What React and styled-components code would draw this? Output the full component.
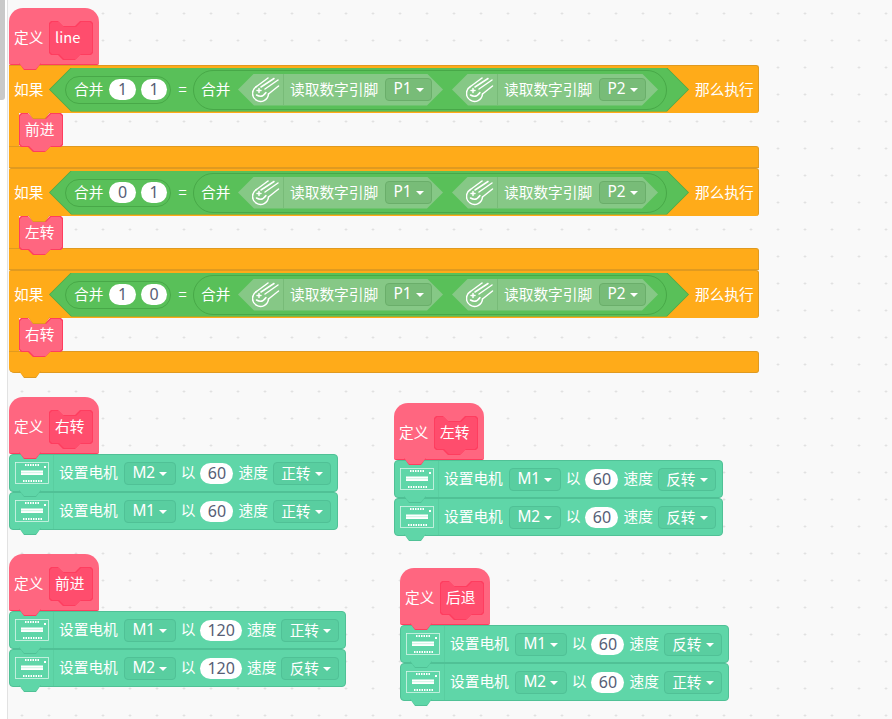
import React from 'react';
import styled, { createGlobalStyle, css } from 'styled-components';

const GlobalStyle = createGlobalStyle`
  html, body { margin: 0; padding: 0; background: #f9f9f9; }
  body { font-family: "Noto Sans CJK SC", "Noto Sans", sans-serif; overflow: hidden; }
`;

const PINK = '#ff6680';
const PINK_EDGE = '#ff3d5f';
const ORANGE = '#ffab19';
const ORANGE_EDGE = '#e09a20';
const TEAL = '#5fd6a8';
const TEAL_EDGE = '#50c196';
const TEAL_DARK = '#59cea0';

// the CJK font sits a little low in its line box
const wordText = css`
  flex: none;
  padding-bottom: 2px;
  white-space: nowrap;
`;

const Canvas = styled.div`
  position: relative;
  width: 892px;
  height: 719px;
  overflow: hidden;
  color: #fff;
  font-size: 14.7px;
  line-height: 20px;
  background-color: #f9f9f9;
  background-image: radial-gradient(circle, #dcdcdc 0.9px, transparent 1.2px);
  background-size: 27px 27px;
  background-position: 8.5px 0;
`;

const Gutter = styled.div`
  position: absolute;
  left: 0;
  top: 0;
  bottom: 0;
  width: 7px;
  background: #fff;
  border-right: 1px solid #e2e2e2;
  z-index: 5;
`;

const ScrollThumb = styled.div`
  width: 5px;
  height: 100px;
  background: #c9c9c9;
  border-radius: 0 0 3px 0;
`;

const Stack = styled.div`
  position: absolute;
  left: ${p => p.$x}px;
  top: ${p => p.$y}px;
  display: flex;
  flex-direction: column;
  align-items: flex-start;
`;

/* the tab under a block */
const Notch = styled.div`
  position: absolute;
  left: ${p => p.$left || 10}px;
  bottom: -6px;
  width: 22px;
  height: 7px;
  background: ${p => p.$edge};
  clip-path: polygon(0 0, 100% 0, calc(100% - 5px) 100%, 5px 100%);
  z-index: 2;
  &::after {
    content: '';
    position: absolute;
    left: 0;
    right: 0;
    top: 0;
    bottom: 1px;
    background: ${p => p.$fill};
    clip-path: polygon(0 0, 100% 0, calc(100% - 5px) 100%, 5px 100%);
  }
`;

const Hat = styled.div`
  position: relative;
  box-sizing: border-box;
  width: 90px;
  height: 57px;
  padding: 13px 5px 0;
  display: flex;
  align-items: flex-start;
  gap: 5px;
  background: ${PINK};
  border-radius: 14px 14px 2px 2px;
  border-bottom: 1px solid ${PINK_EDGE};
`;

const HatLabel = styled.span`
  flex: none;
  width: 30px;
  margin-top: 6px;
  white-space: nowrap;
`;

const SLOT_SHAPE = `polygon(
  2px 0, 9px 0, 14px 5px, 26px 5px, 31px 0, calc(100% - 2px) 0, 100% 2px,
  100% calc(100% - 7px), calc(100% - 2px) calc(100% - 5px), 31px calc(100% - 5px),
  26px 100%, 14px 100%, 9px calc(100% - 5px), 2px calc(100% - 5px), 0 calc(100% - 7px), 0 2px
)`;

const Slot = styled.div`
  position: relative;
  flex: none;
  box-sizing: border-box;
  width: 44px;
  height: 39px;
  padding: 6px 0 0 6px;
  background: ${PINK_EDGE};
  clip-path: ${SLOT_SHAPE};
  z-index: 1;
  &::before {
    content: '';
    position: absolute;
    inset: 1px;
    background: ${p => (p.$call ? PINK : '#ff4d6d')};
    clip-path: ${SLOT_SHAPE};
  }
`;

const SlotText = styled.span`
  position: relative;
  display: block;
  white-space: nowrap;
`;

const IfBlock = styled.div`
  position: relative;
  width: 750px;
`;

const IfHead = styled.div`
  position: relative;
  box-sizing: border-box;
  height: 48px;
  padding-left: 5px;
  display: flex;
  align-items: center;
  background: ${ORANGE};
  border: 1px solid ${ORANGE_EDGE};
  border-left: none;
  border-bottom: none;
  border-radius: ${p => (p.$first ? '0' : '2px')} 3px 3px 0;
`;

const IfWord = styled.span`
  ${wordText}
  width: 30px;
`;

const ThenWord = styled.span`
  ${wordText}
  margin-left: 6px;
`;

const IfMouth = styled.div`
  height: ${p => p.$h}px;
  display: flex;
  align-items: flex-start;
`;

const IfRail = styled.div`
  flex: none;
  width: 10px;
  height: 100%;
  background: ${ORANGE};
`;

const IfFoot = styled.div`
  position: relative;
  box-sizing: border-box;
  height: 22px;
  background: ${ORANGE};
  border: 1px solid ${ORANGE_EDGE};
  border-left: none;
  border-radius: 0 3px ${p => (p.$last ? '3px' : '0')} ${p => (p.$last ? '5px' : '0')};
`;

const HEX_SHAPE = w => `polygon(
  ${w}px 0, calc(100% - ${w}px) 0, 100% 50%, calc(100% - ${w}px) 100%, ${w}px 100%, 0 50%
)`;

const Condition = styled.div`
  position: relative;
  flex: none;
  box-sizing: border-box;
  width: 640px;
  height: 44px;
  margin-left: 5px;
  padding: 0 22px 0 16px;
  display: flex;
  align-items: center;
  background: #4aa94a;
  clip-path: ${HEX_SHAPE(22)};
  &::before {
    content: '';
    position: absolute;
    inset: 0 1px;
    background: #59c059;
    clip-path: ${HEX_SHAPE(22)};
  }
`;

const Round = styled.div`
  position: relative;
  flex: none;
  box-sizing: border-box;
  display: flex;
  align-items: center;
  background: #59c059;
  border: 1px solid #48a848;
`;

const JoinSmall = styled(Round)`
  width: 106px;
  height: 28px;
  padding-left: 8px;
  gap: 5px;
  border-radius: 14px;
`;

const JoinBig = styled(Round)`
  width: 474px;
  height: 40px;
  padding-left: 7px;
  border-radius: 20px;
`;

const GreenWord = styled.span`
  ${wordText}
  width: 30px;
`;

const JoinBigWord = styled(GreenWord)`
  margin-right: 7px;
`;

const Equals = styled.span`
  ${wordText}
  position: relative;
  width: 9px;
  margin: 0 6px 0 7px;
  text-align: center;
`;

const ValuePill = styled.span`
  flex: none;
  box-sizing: border-box;
  height: 21px;
  min-width: ${p => p.$min || 26}px;
  padding: 0 7px 1px;
  display: inline-flex;
  align-items: center;
  justify-content: center;
  border-radius: 11px;
  background: #fff;
  color: #575e75;
  font-family: "Noto Sans", sans-serif;
  font-size: 16px;
`;

const ReadHex = styled.div`
  position: relative;
  flex: none;
  box-sizing: border-box;
  width: ${p => p.$w}px;
  height: 32px;
  margin-right: ${p => p.$gap || 0}px;
  display: flex;
  align-items: center;
  background: #86c886;
  clip-path: ${HEX_SHAPE(16)};
`;

const ReadIcon = styled.div`
  flex: none;
  box-sizing: border-box;
  width: 46px;
  height: 100%;
  padding-left: 14px;
  display: flex;
  align-items: center;
  border-right: 1px solid #78bb78;
`;

const ReadWord = styled.span`
  ${wordText}
  width: 89px;
  margin: 0 6px 0 6px;
`;

const Dropdown = styled.div`
  flex: none;
  box-sizing: border-box;
  width: ${p => p.$w}px;
  height: 23px;
  padding-bottom: 1px;
  display: flex;
  align-items: center;
  justify-content: center;
  gap: 4px;
  border-radius: 4px;
  background: ${p => p.$bg};
  border: 1px solid ${p => p.$edge};
  font-family: "Noto Sans", "Noto Sans CJK SC", sans-serif;
  font-size: ${p => p.$size || 15.4}px;
`;

const Caret = styled.i`
  width: 0;
  height: 0;
  margin-top: 2px;
  border-left: 4px solid transparent;
  border-right: 4px solid transparent;
  border-top: 4px solid #fff;
`;

const MotorRow = styled.div`
  position: relative;
  box-sizing: border-box;
  height: 38px;
  padding-right: 6px;
  display: flex;
  align-items: center;
  background: ${TEAL};
  border: 1px solid ${TEAL_EDGE};
  border-radius: 4px;
`;

const MotorIcon = styled.div`
  flex: none;
  box-sizing: border-box;
  width: 44px;
  height: 100%;
  padding-left: 5px;
  display: flex;
  align-items: center;
  border-right: 1px solid ${TEAL_DARK};
`;

const MotorWord = styled.span`
  ${wordText}
  margin: 0 6px 0 5px;
`;

const SmallWord = styled.span`
  ${wordText}
  margin: 0 5px;
`;

const Meteor = () => (
  <svg width="28" height="28" viewBox="0 0 28 28" fill="none" stroke="#fff" strokeWidth="1.5" strokeLinecap="round">
    <path d="M4.5 10.5 A8 8 0 1 0 16.5 18" />
    <path d="M4.5 10.5 L16 2" />
    <path d="M9 11 L22 2.5" />
    <path d="M13 13 L26 4" />
    <path d="M16.5 18 L26.5 10" />
    <path d="M5 14.5 H9 M7 12.5 V16.5" />
    <path d="M4.5 19 Q10 22.5 14 16.5" />
  </svg>
);

const Motor = () => (
  <svg width="34" height="22" viewBox="0 0 34 22" fill="none" stroke="#fff">
    <rect x="0.5" y="0.5" width="33" height="21" strokeWidth="0.8" strokeOpacity="0.75" />
    <path d="M10 3 H25" strokeWidth="2" strokeDasharray="1.5 1" />
    <path d="M8 19 H27" strokeWidth="2" strokeDasharray="1.5 1" />
    <rect x="6" y="8.5" width="22" height="4.5" fill="#fff" stroke="none" />
    <path d="M6 10.7 H28" strokeWidth="0.8" stroke="#bff0dc" />
    <rect x="29" y="4" width="2" height="2" fill="#fff" stroke="none" />
  </svg>
);

const Read = ({ pin, w, gap }) => (
  <ReadHex $w={w} $gap={gap}>
    <ReadIcon><Meteor /></ReadIcon>
    <ReadWord>读取数字引脚</ReadWord>
    <Dropdown $w={47} $bg="#78bc78" $edge="#6aae6a">{pin}<Caret /></Dropdown>
  </ReadHex>
);

const IfLine = ({ a, b, call, mouth, first, last }) => (
  <IfBlock>
    <IfHead $first={first}>
      <IfWord>如果</IfWord>
      <Condition>
        <JoinSmall>
          <GreenWord>合并</GreenWord>
          <ValuePill $min={27}>{a}</ValuePill>
          <ValuePill>{b}</ValuePill>
        </JoinSmall>
        <Equals>=</Equals>
        <JoinBig>
          <JoinBigWord>合并</JoinBigWord>
          <Read pin="P1" w={205} gap={9} />
          <Read pin="P2" w={206} />
        </JoinBig>
      </Condition>
      <ThenWord>那么执行</ThenWord>
      <Notch $left={19} $fill={ORANGE} $edge={ORANGE_EDGE} />
    </IfHead>
    <IfMouth $h={mouth}>
      <IfRail />
      <Slot $call><SlotText>{call}</SlotText></Slot>
    </IfMouth>
    <IfFoot $last={last}>
      {last && <Notch $left={10} $fill={ORANGE} $edge={ORANGE_EDGE} />}
    </IfFoot>
  </IfBlock>
);

const Define = ({ name }) => (
  <Hat>
    <HatLabel>定义</HatLabel>
    <Slot><SlotText>{name}</SlotText></Slot>
    <Notch $left={10} $fill={PINK} $edge={PINK_EDGE} />
  </Hat>
);

const Motion = ({ motor, speed, dir }) => (
  <MotorRow>
    <MotorIcon><Motor /></MotorIcon>
    <MotorWord>设置电机</MotorWord>
    <Dropdown $w={52} $bg={TEAL_DARK} $edge={TEAL_EDGE}>{motor}<Caret /></Dropdown>
    <SmallWord>以</SmallWord>
    <ValuePill $min={33}>{speed}</ValuePill>
    <SmallWord>速度</SmallWord>
    <Dropdown $w={58} $size={14.7} $bg={TEAL_DARK} $edge={TEAL_EDGE}>{dir}<Caret /></Dropdown>
    <Notch $left={9} $fill={TEAL} $edge={TEAL_EDGE} />
  </MotorRow>
);

const stacks = [
  { x: 9, y: 397, name: '右转', rows: [['M2', 60, '正转'], ['M1', 60, '正转']] },
  { x: 394, y: 403, name: '左转', rows: [['M1', 60, '反转'], ['M2', 60, '反转']] },
  { x: 9, y: 554, name: '前进', rows: [['M1', 120, '正转'], ['M2', 120, '反转']] },
  { x: 400, y: 568, name: '后退', rows: [['M1', 60, '反转'], ['M2', 60, '正转']] },
];

export default function App() {
  return (
    <Canvas>
      <GlobalStyle />
      <Gutter><ScrollThumb /></Gutter>
      <Stack $x={9} $y={8}>
        <Define name="line" />
        <IfLine a="1" b="1" call="前进" mouth={33} first />
        <IfLine a="0" b="1" call="左转" mouth={32} />
        <IfLine a="1" b="0" call="右转" mouth={33} last />
      </Stack>
      {stacks.map(s => (
        <Stack key={s.name} $x={s.x} $y={s.y}>
          <Define name={s.name} />
          {s.rows.map(([motor, speed, dir], i) => (
            <Motion key={i} motor={motor} speed={speed} dir={dir} />
          ))}
        </Stack>
      ))}
    </Canvas>
  );
}
